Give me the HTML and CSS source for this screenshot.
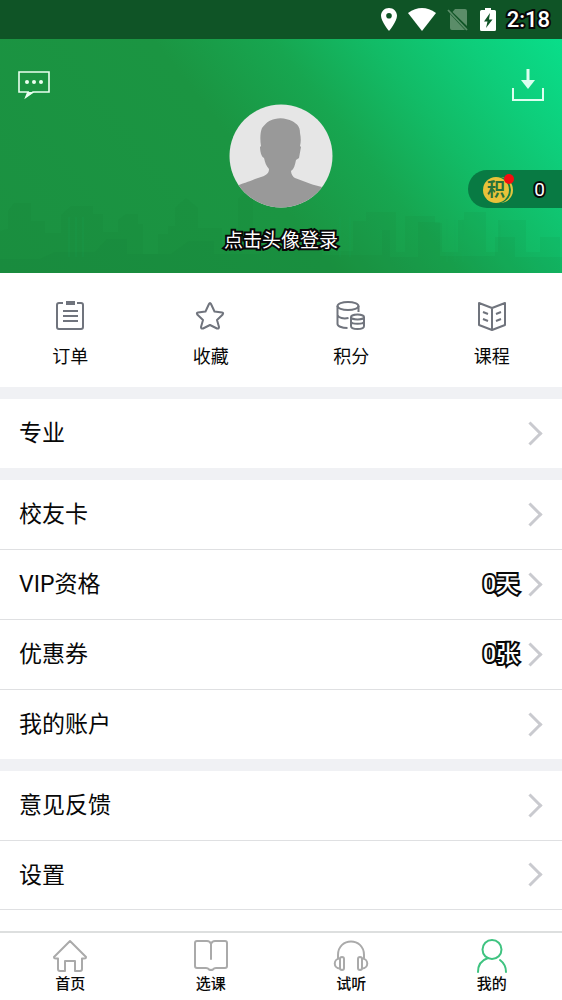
FILE: index.html
```html
<!DOCTYPE html>
<html lang="zh-CN">
<head>
<meta charset="utf-8">
<meta name="viewport" content="width=device-width, initial-scale=1">
<title>我的</title>
<link rel="stylesheet" href="styles.css">
</head>
<body>
<div class="app">
  <div class="status">
    <svg width="16" height="23" viewBox="0 0 16 23"><path fill="#fff" fill-rule="evenodd" d="M8 0C3.500 0 0 3.500 0 7.800 0 13.500 8 23 8 23s8-9.500 8-15.200C16 3.500 12.500 0 8 0zm0 5a2.800 2.800 0 1 1 0 5.600A2.800 2.800 0 0 1 8 5z"/></svg>
    <svg width="28" height="23" viewBox="0 0 28 23"><path fill="#fff" d="M0 5Q14-5 28 5L14 23z"/></svg>
    <svg width="22" height="23" viewBox="0 0 22 23"><path fill="#5b8d69" d="M8 1h10a2 2 0 0 1 2 2v15L5.500 4zM3 6l15 16H5a2 2 0 0 1-2-2z"/><path stroke="#5b8d69" stroke-width="1.800" d="M1 2l19 20"/></svg>
    <svg width="16" height="23" viewBox="0 0 16 23"><path fill="#fff" fill-rule="evenodd" d="M5 0h6v2h3.500A1.500 1.500 0 0 1 16 3.500v18a1.500 1.500 0 0 1-1.500 1.500h-13A1.500 1.500 0 0 1 0 21.500v-18A1.500 1.500 0 0 1 1.500 2H5zm5 5l-6 8.500h3.500L6 20l6.500-8.500H9z"/></svg>
    <time class="clock outlined">2:18</time>
  </div>

  <header class="hero">
    <svg class="skyline" viewBox="0 0 562 84" preserveAspectRatio="none">
      <path fill="#146f37" opacity=".08" d="M0 42l8-2V22l6-8h17v18h14v12h16V26l10-9h22v8h10v18h15V31l8-6h12v10h5v30h15V45h10V37h7V19l11-10 12 10v20h24v22h16V10l5-5h10v38h22v15h20V42h28v20h30V32h13v-9h30v40h9V27h30v7h7v29h16V31h6v-8h22v40h12V31h28v32h14V48h20v36H0z"/>
      <path fill="#176f38" opacity=".08" d="M0 70h40l15-7h40l12-13h20v15h44l18-13h25v13h45l23-9h40v10h60V41h8v27h28V33h22v34h55V48h20v20h47v16H0z"/>
      <path stroke="#18a95a" stroke-width="2" opacity=".12" d="M69 28v40M76 28v40M83 28v40M447 30v43M455 30v43M463 30v43M340 28v40M350 28v40M500 36v35"/>
    </svg>
    <div class="hero-top">
      <button class="icon-button" aria-label="消息"><svg width="32" height="30" viewBox="0 0 32 30" fill="none" stroke="#eaffef" stroke-width="1.600"><path d="M1 2h30v20H15l-7 5 2-5H1z"/><g fill="#eaffef" stroke="none"><path d="M7 28l3-6h6z"/><circle cx="9" cy="12" r="2"/><circle cx="16" cy="12" r="2"/><circle cx="23" cy="12" r="2"/></g></svg></button>
      <button class="icon-button" aria-label="下载"><svg width="32" height="32" viewBox="0 0 32 32" fill="none" stroke="#dcfff0" stroke-width="2"><path d="M1 19v12h30V19"/><path stroke-width="3" d="M16 0v14"/><path fill="#dcfff0" stroke="none" d="M9 11h14l-7 9z"/></svg></button>
    </div>
    <button class="profile">
      <svg width="104" height="104" viewBox="0 0 104 104"><defs><clipPath id="portrait"><circle cx="52" cy="52" r="51.500"/></clipPath></defs><g clip-path="url(#portrait)"><path fill="#e6e6e6" d="M0 0h104v104H0z"/><path fill="#999" d="M32 42c-1-6-1-13 1-18 4-5 7-8 13-9 6-2 13 0 17 2 5 3 8 5 8 12 1 5 1 9 0 13l1 1-2 11-3 2c-1 5-2 9-5 11 0 3 2 6 4 7l16 6c6 2 10 2 16 5v19H6V83c7-4 14-5 20-8l9-3c3-2 5-3 5-7-3-3-4-7-5-11-3-1-4-8-4-11z"/></g></svg>
      <span class="login outlined">点击头像登录</span>
    </button>
    <button class="points">
      <svg class="coin" width="32" height="30" viewBox="0 0 32 30"><circle cx="18" cy="16" r="13" fill="#e2c63e"/><circle cx="15.500" cy="16" r="13.500" fill="#147d41"/><circle cx="14" cy="16" r="13" fill="#e9c23a"/><text class="coin-text" x="14" y="22" text-anchor="middle">积</text><circle cx="27" cy="5" r="5" fill="#f50d10"/></svg>
      <span class="outlined">0</span>
    </button>
  </header>

  <main class="content">
    <nav class="shortcuts">
      <a href="#orders"><svg width="32" height="32" viewBox="0 0 32 32"><path d="M9 3H5a2 2 0 0 0-2 2v22a2 2 0 0 0 2 2h22a2 2 0 0 0 2-2V5a2 2 0 0 0-2-2h-4M9 11h15M9 16h15M9 21h15"/><path stroke-width="4" stroke-linecap="butt" d="M12 3h9"/></svg>订单</a>
      <a href="#favorites"><svg width="32" height="32" viewBox="0 0 32 32"><path d="M14 4q1-2 2 0l3.500 7.500 7.500 1q2 .5.500 2.300L22 20l2 7q0 2-2 1.500l-7-3.500-7 3.500q-2 .5-2-1.500l2-7-5.500-5.200Q1 13 3 12.500l7.500-1z"/></svg>收藏</a>
      <a href="#points"><svg width="32" height="32" viewBox="0 0 32 32"><ellipse cx="13" cy="6" rx="10.500" ry="4"/><path d="M2.500 6v18c0 2 4 4 10 4M23.500 6v6M2.500 15c1 3 6 4 11 3"/><ellipse cx="22.500" cy="17" rx="6.500" ry="2.500"/><path d="M16 17v9c0 4 13 4 13 0v-9M16 21.500c0 3 13 3 13 0"/></svg>积分</a>
      <a href="#courses"><svg width="32" height="32" viewBox="0 0 32 32"><path d="M16 8L3 3v22l13 5 13-5V3zM16 8v22M7 12l5 2M7 19l5 2M20 14l5-2M20 21l5-2"/></svg>课程</a>
    </nav>
    <section class="group"><a class="row" href="#major"><span>专业</span><i class="chevron"></i></a></section>
    <section class="group">
      <a class="row" href="#alumni"><span>校友卡</span><i class="chevron"></i></a>
      <a class="row" href="#vip"><span>VIP资格</span><b class="value outlined">0天</b><i class="chevron"></i></a>
      <a class="row" href="#coupon"><span>优惠券</span><b class="value outlined">0张</b><i class="chevron"></i></a>
      <a class="row" href="#account"><span>我的账户</span><i class="chevron"></i></a>
    </section>
    <section class="group last">
      <a class="row" href="#feedback"><span>意见反馈</span><i class="chevron"></i></a>
      <a class="row" href="#settings"><span>设置</span><i class="chevron"></i></a>
    </section>
  </main>

  <nav class="tabs">
    <a href="#home"><svg width="36" height="36" viewBox="0 0 36 36"><path d="M18 3L2 19q0 1.500 2 1.500h2V31q0 2 2 2h5V23h10v10h5q2 0 2-2V20.500h2q2 0 2-1.500z"/></svg>首页</a>
    <a href="#select"><svg width="36" height="36" viewBox="0 0 36 36"><path d="M18 21V6q-1-3-4-3H4Q2 3 2 5v23q0 2 2 2h9q2 0 3 1.500 2 1 4 0 1-1.500 3-1.500h9q2 0 2-2V5q0-2-2-2H22q-3 0-4 3"/></svg>选课</a>
    <a href="#listen"><svg width="36" height="36" viewBox="0 0 36 36"><path d="M5 20v-3C5-1 31-1 31 17v3"/><path d="M7 20.500c-7 0-7 10 0 10M29 20.500c7 0 7 10 0 10"/><rect x="7" y="19" width="4" height="13" rx="2"/><rect x="25" y="19" width="4" height="13" rx="2"/></svg>试听</a>
    <a class="active" href="#me" aria-current="page"><svg width="36" height="36" viewBox="0 0 36 36"><circle cx="18" cy="11.500" r="9.500"/><path d="M4 34c0-7 4-12 10-14M26 22c4 3 6 7 6 12"/></svg>我的</a>
  </nav>
</div>
</body>
</html>
```
FILE: styles.css
```css
* { box-sizing: border-box; }
body {
  margin: 0;
  font-family: Roboto, "Noto Sans CJK SC", sans-serif;
  color: #080808;
  background: #fff;
}
a { color: inherit; text-decoration: none; }
button {
  padding: 0;
  border: 0;
  background: none;
  color: inherit;
  font: inherit;
  cursor: pointer;
}
svg { display: block; flex: none; }
.app { height: 100vh; display: flex; flex-direction: column; }
.outlined {
  color: #fff;
  -webkit-text-stroke: 4px #080808;
  paint-order: stroke fill;
  stroke-linejoin: round;
}

.status {
  flex: none;
  height: 39px;
  padding: 0 12px;
  display: flex;
  align-items: center;
  justify-content: flex-end;
  gap: 11px;
  background: #0f5426;
}
.clock { font-size: 22px; font-weight: 500; line-height: 32px; }

.hero {
  flex: none;
  position: relative;
  padding: 27px 18px 20px;
  background: linear-gradient(52deg, #1b9141 0%, #1b9542 45%, #17a650 61%, #12bb66 74%, #0ecd7a 87%, #09de8a 100%);
}
.skyline { position: absolute; left: 0; bottom: 0; width: 100%; height: 84px; }
.hero-top { display: flex; justify-content: space-between; height: 38px; align-items: center; }
.profile {
  position: relative;
  margin: 0 auto;
  display: flex;
  flex-direction: column;
  align-items: center;
  gap: 21px;
}
.login { font-size: 19px; line-height: 24px; }
.points {
  position: absolute;
  right: 0;
  top: 131px;
  height: 38px;
  padding: 0 17px 0 14px;
  display: flex;
  align-items: center;
  gap: 20px;
  border-radius: 19px 0 0 19px;
  background: #087a43;
  font-size: 19px;
}
.coin-text { font: 700 18px "Noto Sans CJK SC", sans-serif; fill: #28713a; }

.content { flex: 1; min-height: 0; overflow: hidden; background: #f0f1f4; }
.shortcuts {
  display: grid;
  grid-template-columns: repeat(4, 1fr);
  padding: 27px 0 16px;
  background: #fff;
  font-size: 18px;
  line-height: 28px;
}
.shortcuts a { display: flex; flex-direction: column; align-items: center; gap: 11px; }
.shortcuts svg, .tabs svg {
  fill: none;
  stroke: #70747d;
  stroke-width: 2;
  stroke-linejoin: round;
}
.tabs svg { stroke-linecap: round; }
.group { margin-top: 12px; background: #fff; }
.row {
  height: 69px;
  padding: 0 19px 1px;
  display: flex;
  align-items: center;
  font-size: 23px;
}
.row + .row { border-top: 1px solid #dfe0e2; height: 70px; }
.last { min-height: 100%; }
.last .row:last-child { border-bottom: 1px solid #dfe0e2; }
.row > span, .value { line-height: 28px; padding-top: 2px; }
.value { margin-left: auto; margin-right: 3px; font-weight: 500; }
.row > span + .chevron { margin-left: auto; }
.chevron {
  width: 17px;
  height: 17px;
  margin-right: 4px;
  border: solid #c9cacf;
  border-width: 3px 3px 0 0;
  transform: rotate(45deg);
}

.tabs {
  flex: none;
  display: grid;
  grid-template-columns: repeat(4, 1fr);
  padding: 5px 0 6px;
  border-top: 2px solid #dddfdf;
  background: #fff;
  font-size: 15px;
  font-weight: 500;
  line-height: 20px;
}
.tabs a { display: flex; flex-direction: column; align-items: center; }
.tabs svg { stroke: #aaa; }
.tabs .active svg { stroke: #3fc380; }
```
